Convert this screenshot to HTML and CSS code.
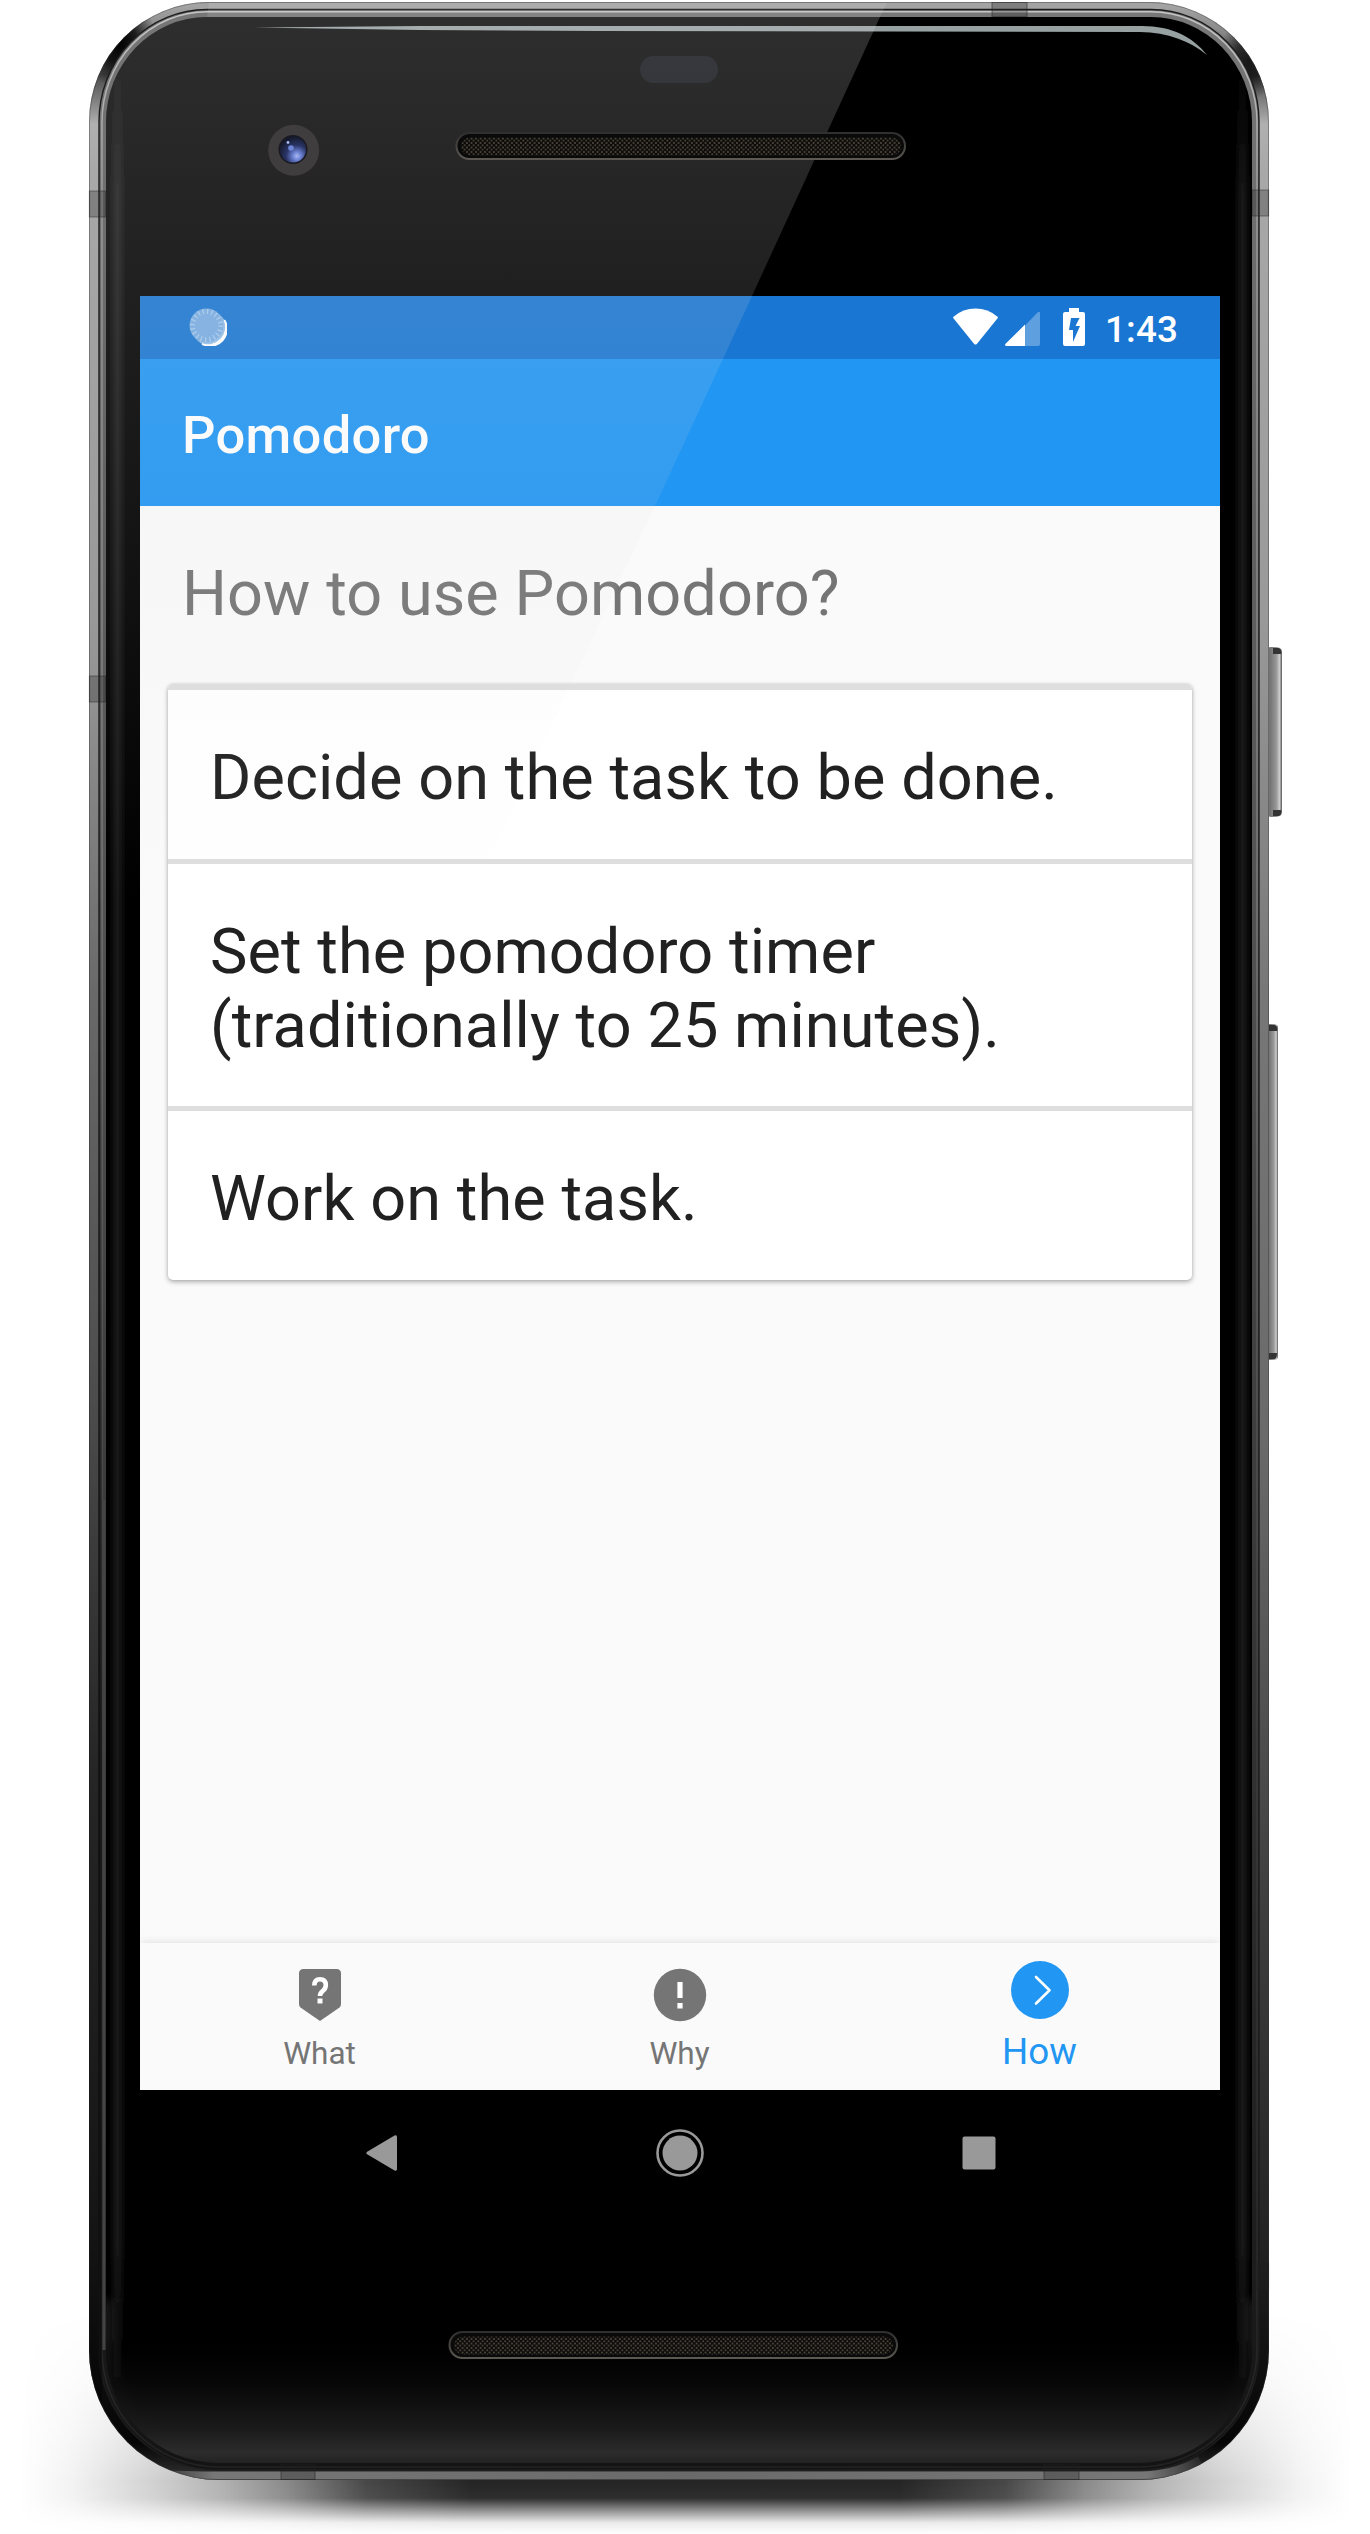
FILE: index.html
```html
<!DOCTYPE html>
<html lang="en">
<head>
<meta charset="utf-8">
<title>Pomodoro</title>
<link rel="stylesheet" href="styles.css">
</head>
<body>
<div class="device">
  <svg class="frame" viewBox="0 0 1370 2534" aria-hidden="true">
    <defs>
      <linearGradient id="metal" gradientUnits="userSpaceOnUse" x1="0" y1="0" x2="0" y2="2480">
        <stop offset="0" stop-color="#a9a9a9"/><stop offset=".012" stop-color="#8a8a8a"/><stop offset=".03" stop-color="#4a4a4a"/>
        <stop offset=".05" stop-color="#b0b0b0"/><stop offset=".07" stop-color="#a8a8a8"/><stop offset=".25" stop-color="#999"/>
        <stop offset=".4" stop-color="#777"/><stop offset=".58" stop-color="#6a6a6a"/><stop offset=".76" stop-color="#404040"/>
        <stop offset=".9" stop-color="#242424"/><stop offset=".95" stop-color="#111"/><stop offset=".985" stop-color="#050505"/><stop offset="1" stop-color="#333"/>
      </linearGradient>
      <linearGradient id="rim" gradientUnits="userSpaceOnUse" x1="0" y1="0" x2="0" y2="2480">
        <stop offset="0" stop-color="#777"/><stop offset=".3" stop-color="#585858"/><stop offset=".6" stop-color="#3c3c3c"/>
        <stop offset=".8" stop-color="#282828"/><stop offset="1" stop-color="#131313"/>
      </linearGradient>
      <linearGradient id="rimLine" gradientUnits="userSpaceOnUse" x1="0" y1="0" x2="0" y2="2480">
        <stop offset="0" stop-color="#c8c8c8"/><stop offset=".08" stop-color="#999"/><stop offset=".35" stop-color="#777"/><stop offset=".7" stop-color="#3c3c3c"/><stop offset="1" stop-color="#222"/>
      </linearGradient>
      <linearGradient id="bottomEdge" gradientUnits="userSpaceOnUse" x1="150" y1="0" x2="1210" y2="0">
        <stop offset="0" stop-color="#777" stop-opacity="0"/><stop offset=".06" stop-color="#777"/><stop offset=".5" stop-color="#6a6a6a"/><stop offset=".94" stop-color="#777"/><stop offset="1" stop-color="#777" stop-opacity="0"/>
      </linearGradient>
      <linearGradient id="leftShade" gradientUnits="userSpaceOnUse" x1="0" y1="700" x2="0" y2="2480">
        <stop offset="0" stop-color="#000" stop-opacity="0"/><stop offset=".35" stop-color="#000" stop-opacity=".25"/><stop offset=".6" stop-color="#000" stop-opacity=".5"/><stop offset="1" stop-color="#000" stop-opacity=".4"/>
      </linearGradient>
      <linearGradient id="edgeGlow" gradientUnits="userSpaceOnUse" x1="0" y1="60" x2="0" y2="2400">
        <stop offset="0" stop-color="#222" stop-opacity="0"/><stop offset=".06" stop-color="#222"/><stop offset=".93" stop-color="#222"/><stop offset="1" stop-color="#222" stop-opacity="0"/>
      </linearGradient>
      <linearGradient id="bottomGlow" x1="0" y1="0" x2="0" y2="1">
        <stop offset="0" stop-color="#000" stop-opacity="0"/><stop offset=".4" stop-color="#0b0b0b" stop-opacity=".8"/><stop offset=".75" stop-color="#1c1c1c"/><stop offset=".92" stop-color="#2c2c2c"/><stop offset="1" stop-color="#222"/>
      </linearGradient>
      <linearGradient id="sheen" gradientUnits="userSpaceOnUse" x1="0" y1="0" x2="0" y2="900">
        <stop offset="0" stop-color="#dadada" stop-opacity=".215"/><stop offset=".33" stop-color="#dadada" stop-opacity=".145"/>
        <stop offset=".6" stop-color="#dadada" stop-opacity=".09"/><stop offset=".89" stop-color="#dadada" stop-opacity=".025"/><stop offset="1" stop-color="#dadada" stop-opacity="0"/>
      </linearGradient>
      <linearGradient id="shadowX" gradientUnits="userSpaceOnUse" x1="20" y1="0" x2="1352" y2="0">
        <stop offset="0" stop-opacity="0"/><stop offset=".04" stop-opacity=".05"/><stop offset=".1" stop-opacity=".18"/><stop offset=".15" stop-opacity=".3"/>
        <stop offset=".2" stop-opacity=".46"/><stop offset=".26" stop-opacity=".72"/><stop offset=".34" stop-opacity=".86"/><stop offset=".66" stop-opacity=".86"/>
        <stop offset=".74" stop-opacity=".72"/><stop offset=".8" stop-opacity=".46"/><stop offset=".85" stop-opacity=".3"/><stop offset=".9" stop-opacity=".18"/><stop offset=".96" stop-opacity=".05"/><stop offset="1" stop-opacity="0"/>
      </linearGradient>
      <linearGradient id="shadowY" gradientUnits="userSpaceOnUse" x1="0" y1="2310" x2="0" y2="2534">
        <stop offset="0" stop-color="#000"/><stop offset=".3" stop-color="#3a3a3a"/><stop offset=".55" stop-color="#999"/><stop offset=".76" stop-color="#fff"/>
        <stop offset=".84" stop-color="#f4f4f4"/><stop offset=".9" stop-color="#777"/><stop offset=".95" stop-color="#181818"/><stop offset="1" stop-color="#000"/>
      </linearGradient>
      <mask id="shadowMask" maskUnits="userSpaceOnUse" x="0" y="2300" width="1370" height="234"><rect y="2300" width="1370" height="234" fill="url(#shadowY)"/></mask>
      <radialGradient id="corner"><stop offset="0" stop-color="#000"/><stop offset=".45" stop-color="#000" stop-opacity=".8"/><stop offset="1" stop-color="#000" stop-opacity="0"/></radialGradient>
      <radialGradient id="lens" cx=".65" cy=".75" r=".75"><stop offset="0" stop-color="#a9b8f4"/><stop offset=".22" stop-color="#6a7fd0"/><stop offset=".55" stop-color="#2a3567"/><stop offset="1" stop-color="#15192b"/></radialGradient>
      <linearGradient id="key" x1="0" y1="0" x2="1" y2="0"><stop offset="0" stop-color="#6f6f6f"/><stop offset=".3" stop-color="#777"/><stop offset=".65" stop-color="#999"/><stop offset=".85" stop-color="#ccc"/><stop offset="1" stop-color="#555"/></linearGradient>
      <linearGradient id="speakerEdge" x1="0" y1="0" x2="0" y2="1"><stop offset="0" stop-color="#2f2f2f"/><stop offset="1" stop-color="#5c5953"/></linearGradient>
      <pattern id="mesh" width="4.5" height="4.5" patternUnits="userSpaceOnUse"><rect width="4.5" height="4.5" fill="#0b0a08"/><circle cx="1.2" cy="1.2" r=".95" fill="#575044"/><circle cx="3.5" cy="3.5" r=".95" fill="#575044"/></pattern>
      <filter id="soft" filterUnits="userSpaceOnUse" x="90" y="40" width="1180" height="2400"><feGaussianBlur stdDeviation="3.5 1"/></filter>
      <filter id="softAll" x="-.1" width="1.2" y="-.1" height="1.2"><feGaussianBlur stdDeviation="5"/></filter>
      <clipPath id="body"><path d="M209 2H1149A120 120 0 0 1 1269 122V2350A130 130 0 0 1 1139 2480H219A130 130 0 0 1 89 2350V122A120 120 0 0 1 209 2Z"/></clipPath>
      <clipPath id="glass"><path d="M207 17H1151A101 105 0 0 1 1252 122V2350A113 113 0 0 1 1139 2463H219A113 113 0 0 1 106 2350V122A101 105 0 0 1 207 17Z"/></clipPath>
    </defs>
    <rect x="20" y="2300" width="1332" height="234" fill="url(#shadowX)" mask="url(#shadowMask)"/>
    <g>
      <rect x="1266" y="647" width="16" height="170" rx="5" fill="url(#key)"/><path d="M1273 648h6q3 1 2 6h-8zM1273 810h8q1 5-2 6h-6z" fill="#333"/>
      <rect x="1266" y="1024" width="12" height="336" rx="4" fill="url(#key)"/><path d="M1269 1025h6q3 1 2 6h-8zM1269 1353h8q0 6-3 6h-5z" fill="#333"/>
    </g>
    <g clip-path="url(#body)">
      <rect x="80" width="1200" height="2490" fill="url(#metal)"/>
      <rect x="200" width="960" height="20" fill="#a3a3a3"/>
      <ellipse cx="119" cy="42" rx="38" ry="46" fill="url(#corner)"/>
      <ellipse cx="1249" cy="60" rx="32" ry="40" fill="url(#corner)" opacity=".75"/>
      <path d="M160 2474Q185 2475.500 219 2475.500H1139Q1173 2475.500 1200 2460" fill="none" stroke="url(#bottomEdge)" stroke-width="8"/>
      <path d="M209 2H1149A120 120 0 0 1 1269 122V2350A130 130 0 0 1 1139 2480H219A130 130 0 0 1 89 2350V122A120 120 0 0 1 209 2Z" fill="none" stroke="#333" stroke-opacity=".4" stroke-width="2"/>
    </g>
    <path d="M207 9.500H1151A108 112 0 0 1 1259 122V2350A120 120 0 0 1 1139 2470H219A120 120 0 0 1 99 2350V122A108 112 0 0 1 207 9.500Z" fill="url(#rim)" stroke="#1c1c1c" stroke-width="1.400"/>
    <path d="M207 11.800H1151A106 110 0 0 1 1257 122V2350A118 118 0 0 1 1139 2467H219A117 117 0 0 1 102 2350V122A105 110 0 0 1 207 11.800Z" fill="none" stroke="url(#rimLine)" stroke-width="1.500"/>
    <rect x="88" y="700" width="14" height="1780" fill="url(#leftShade)" clip-path="url(#body)"/>
    <rect x="102.500" y="1500" width="3" height="850" fill="#444"/>
    <g fill="#222" fill-opacity=".28" stroke="#222" stroke-opacity=".45" stroke-width="1.200">
      <path d="M89.500 191h16v26h-16zM89.500 676h16v26h-16zM1252 190h16.500v26h-16.500zM1252 2263h16.500v26h-16.500zM992 2.500h35v14h-35zM281 2464h34v15.500h-34zM1044 2464h35v15.500h-35z"/>
    </g>
    <g clip-path="url(#glass)">
      <rect x="100" y="10" width="1160" height="2460"/>
      <path d="M106 2300V2350A113 113 0 0 0 219 2463H1139A113 113 0 0 0 1252 2350V2300" fill="none" stroke="#2a2a2a" stroke-width="20" filter="url(#softAll)" opacity=".5"/>
      <rect x="106" y="2335" width="1146" height="128" fill="url(#bottomGlow)"/>
      <g filter="url(#soft)">
        <rect x="114" y="60" width="7" height="2340" fill="url(#edgeGlow)"/>
        <rect x="1239" y="60" width="7" height="2340" fill="url(#edgeGlow)"/>
      </g>
    </g>
    <path d="M248 27.500L420 26H1142C1172 26 1193 37 1207 55C1190 41 1168 32.500 1140 32L600 31L420 30Z" fill="#98a1a2"/>
    <rect x="640" y="56" width="78" height="27" rx="13.500" fill="#0d0f15"/>
  </svg>

  <main class="screen">
    <header class="status">
      <svg class="spinner" viewBox="0 0 38 38"><circle cx="20.500" cy="20.500" r="17" fill="#fff" fill-opacity=".55"/><path d="M35.500 12A17 17 0 0 1 13 36A18 18 0 0 0 35.500 12Z" fill="#fff" stroke="#fff" stroke-width="1.500"/><circle cx="17.500" cy="17.500" r="17" fill="#78ace2"/><circle cx="17.500" cy="17.500" r="14" fill="none" stroke="#a3c8ee" stroke-width="5" stroke-dasharray="1.400 2.998"/></svg>
      <svg class="wifi" viewBox="0 0 45 37"><path d="M.8 8.500Q10 .5 22.500 .5T44.200 8.500L45 9.800 23.800 36Q22.500 37.200 21.200 36L0 9.800Z" fill="#fff"/></svg>
      <svg class="signal" viewBox="0 0 35 35"><path d="M20 14.500L33 1Q35 0 35 2V33Q35 35 33 35H20Z" fill="#fff" fill-opacity=".3"/><path d="M20 13.500V35H1Q-.8 34 .8 32.500Z" fill="#fff"/></svg>
      <svg class="battery" viewBox="0 0 22 38"><path fill="#fff" fill-rule="evenodd" d="M6 0H16V4H20Q22 4 22 6V36Q22 38 20 38H2Q0 38 0 36V6Q0 4 2 4H6ZM8 10L6 22H10V34L17 18H12.500L16.500 10Z"/></svg>
      <time class="clock">1:43</time>
    </header>
    <div class="appbar"><h1 class="title">Pomodoro</h1></div>
    <section class="content">
      <h2 class="heading">How to use Pomodoro?</h2>
      <ol class="card">
        <li class="step">Decide on the task to be done.</li>
        <li class="step">Set the pomodoro timer<br>(traditionally to 25 minutes).</li>
        <li class="step">Work on the task.</li>
      </ol>
    </section>
    <nav class="tabs">
      <a class="tab"><svg class="tab-icon" viewBox="0 0 60 60"><path d="M13.500 4H46.500Q51 4 51 8.500V39Q51 41 49.500 42.500L30 56 10.500 42.500Q9 41 9 39V8.500Q9 4 13.500 4Z" fill="#757575"/><path d="M24.300 20.500Q24.300 14.200 30 14.200T35.800 20Q35.800 23.500 33 25.700Q30 28 30 31" fill="none" stroke="#fff" stroke-width="4.600"/><path d="M27.500 33.500h5v5h-5z" fill="#fff"/></svg><span>What</span></a>
      <a class="tab"><svg class="tab-icon" viewBox="0 0 60 60"><circle cx="30" cy="30" r="26.200" fill="#757575"/><path d="M27.400 17h5.200v16h-5.200zM27.400 38h5.200v5.500h-5.200z" fill="#fff"/></svg><span>Why</span></a>
      <a class="tab active"><svg class="tab-icon" viewBox="0 0 60 60"><circle cx="30" cy="30" r="29" fill="#2196f3"/><path d="M26 17L39.500 30.300L26 43.500" fill="none" stroke="#fff" stroke-width="2.600" stroke-linecap="round" stroke-linejoin="round"/></svg><span>How</span></a>
    </nav>
  </main>
  <nav class="sysnav">
    <svg class="sys" viewBox="0 0 50 50"><path d="M11.500 23.500L38.500 7.500Q41 6.500 41 9V41Q41 43.500 38.500 42.500L11.500 26.500Q9 25 11.500 23.500Z" fill="#999"/></svg>
    <svg class="sys" viewBox="0 0 50 50"><circle cx="25" cy="25" r="22.500" fill="none" stroke="#999" stroke-width="2.600"/><circle cx="25" cy="25" r="17.500" fill="#999"/></svg>
    <svg class="sys" viewBox="0 0 50 50"><rect x="8.500" y="8.500" width="33" height="33" rx="2" fill="#999"/></svg>
  </nav>

  <svg class="frame" viewBox="0 0 1370 2534" aria-hidden="true">
    <path d="M207 17H880L752 296L655 506L568 690L470 900H106V122A101 105 0 0 1 207 17Z" fill="url(#sheen)"/>
    <path d="M209 3H887L880 17H207Z" fill="#fff" fill-opacity=".1"/>
    <rect x="456.500" y="133" width="448.500" height="26" rx="13" fill="#0a0a0a" stroke="url(#speakerEdge)" stroke-width="2"/>
    <rect x="461" y="137.500" width="440" height="18" rx="9" fill="url(#mesh)"/>
    <rect x="449.500" y="2332" width="447.500" height="26" rx="13" fill="#0a0a0a" stroke="url(#speakerEdge)" stroke-width="2"/>
    <rect x="454" y="2336.500" width="439" height="18" rx="9" fill="url(#mesh)"/>
    <circle cx="293.700" cy="150.300" r="25.500" fill="#403d3f"/>
    <circle cx="293" cy="149.500" r="14.500" fill="#191a21"/>
    <circle cx="293" cy="149.500" r="13" fill="url(#lens)"/>
    <circle cx="291" cy="148" r="2.800" fill="#6d86d8"/><circle cx="288" cy="142.500" r="1.400" fill="#aabaf0"/>
  </svg>
</div>
</body>
</html>
```
FILE: styles.css
```css
* { box-sizing: border-box; }
body { margin: 0; background: #fff; font-family: Roboto, sans-serif; }
.device { position: relative; width: 1370px; height: 2534px; padding: 296px 150px 0 140px; overflow: hidden; }
.frame { position: absolute; inset: 0; width: 1370px; height: 2534px; pointer-events: none; }
.screen { position: relative; display: flex; flex-direction: column; height: 1794px; background: #fafafa; }
.status { display: flex; align-items: flex-start; height: 63px; padding: 12px 43px 0 49px; background: #1976d2; color: #fff; }
.spinner { width: 38px; height: 38px; margin-right: auto; }
.wifi { width: 45px; height: 37px; }
.signal { width: 35px; height: 35px; margin: 3px 23px 0 7px; }
.battery { width: 22px; height: 38px; }
.clock { width: 72px; margin-left: 20px; font-size: 36.750px; font-weight: 500; line-height: 43px; letter-spacing: .2px; }
.appbar { display: flex; align-items: center; height: 147px; padding: 4px 42px 0; background: #2196f3; }
.title { margin: 0; color: #fff; font-size: 52.500px; font-weight: 500; line-height: 62px; letter-spacing: .3px; }
.content { flex: 1; padding: 51px 28px 0; }
.heading { margin: 0 0 53px; padding-left: 14px; color: #757575; font-size: 63px; font-weight: 400; line-height: 74px; letter-spacing: .08px; }
.card { margin: 0; padding: 0; list-style: none; background: #fff; border-radius: 5px; box-shadow: 0 2px 5px rgba(0, 0, 0, .3), 0 0 3px rgba(0, 0, 0, .1); overflow: hidden; }
.step { padding: 51px 42px 44px; border-top: 5px solid #dedede; color: #212121; font-size: 63px; line-height: 74px; letter-spacing: .08px; }
.step:first-child { border-top-width: 6px; }
.step:nth-child(2) { padding-bottom: 43px; }
.tabs { display: flex; height: 147px; box-shadow: 0 -1px 8px rgba(0, 0, 0, .1); background: #fafafa; }
.tab { flex: 1; display: flex; flex-direction: column; align-items: center; padding: 22px 1px 0 0; color: #757575; font-size: 31.500px; line-height: 38px; }
.tab-icon { width: 60px; height: 60px; margin-bottom: 10px; }
.tab.active { padding-top: 17px; color: #2196f3; font-size: 36.750px; line-height: 44px; }
.sysnav { position: relative; display: flex; justify-content: center; gap: 249px; height: 126px; padding: 38px 1px 0 0; }
.sys { width: 50px; height: 50px; }
```
